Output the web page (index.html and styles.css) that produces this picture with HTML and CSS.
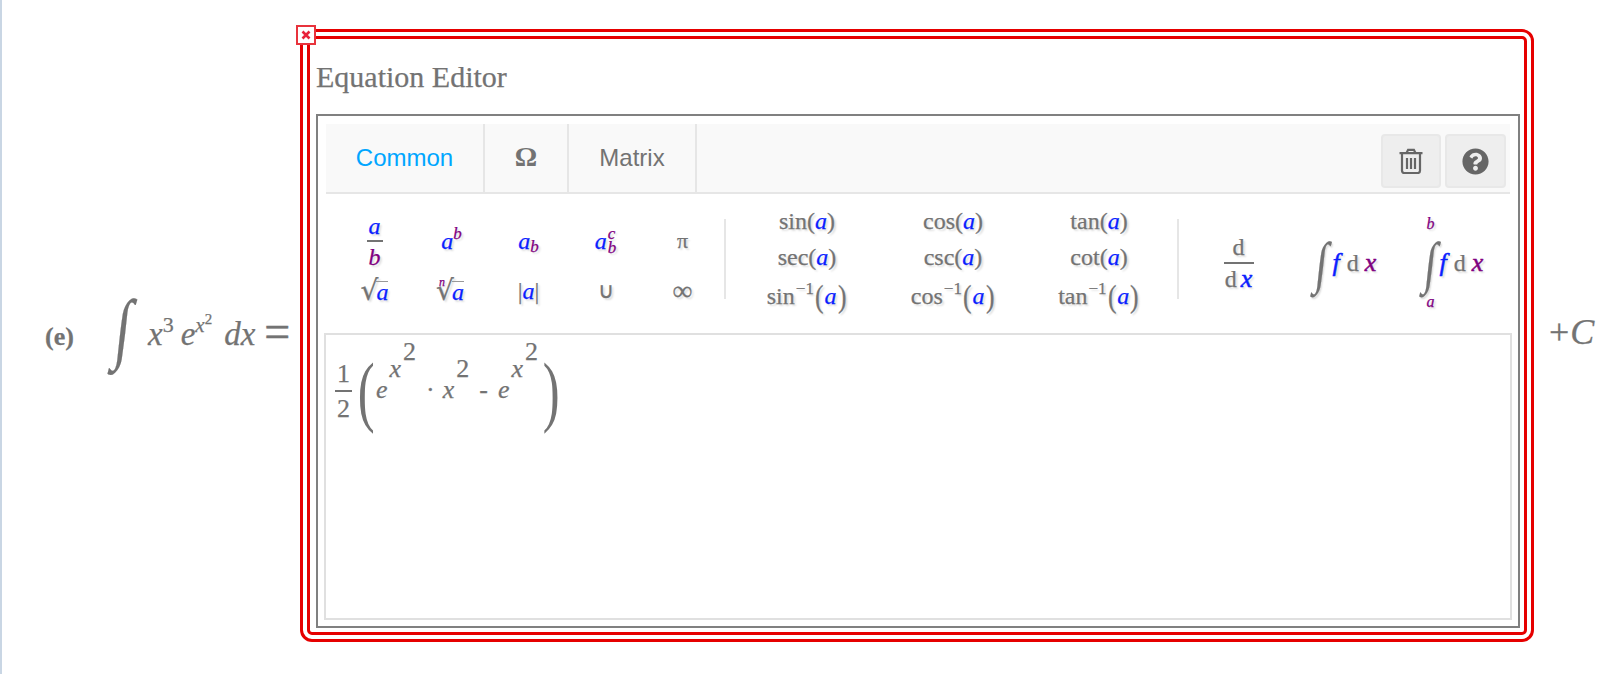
FILE: index.html
```html
<!DOCTYPE html>
<html lang="en">
<head>
<meta charset="utf-8">
<title>Equation Editor</title>
<link rel="stylesheet" href="styles.css">
</head>
<body>
<main class="page">
  <div class="question">
    <div class="eqn">
      <b class="qlabel">(e)</b>
      <span class="bigint">∫</span>
      <i>x</i><span class="s1">3</span>
      <i class="e">e</i><i class="s1 sx">x</i><span class="s2">2</span>
      <i class="dx">dx</i>
      <span class="equals">=</span>
    </div>
    <section class="editor">
      <button class="close" type="button" aria-label="Close">
        <svg viewBox="0 0 10 10" width="10" height="10"><path d="M1.5 1.5l7 7M8.5 1.5l-7 7"/></svg>
      </button>
      <h2 class="title">Equation Editor</h2>
      <div class="box">
        <div class="toolbar">
          <div class="tab tab-common">Common</div>
          <div class="tab tab-omega">Ω</div>
          <div class="tab tab-matrix">Matrix</div>
          <div class="actions">
            <button class="action a-trash" type="button" aria-label="Clear">
              <svg viewBox="0 0 24 26" width="24" height="26"><path d="M7.5 5l1.6-3.2h5.8L16.5 5M.5 5.2h23M3 5.5v17.3a2.2 2.2 0 0 0 2.2 2.2h13.6a2.2 2.2 0 0 0 2.2-2.2V5.5M8 10v11M12 10v11M16 10v11"/></svg>
            </button>
            <button class="action a-help" type="button" aria-label="Help">
              <svg viewBox="0 0 512 512" width="27" height="27"><path d="M504 256c0 136.997-111.043 248-248 248S8 392.997 8 256C8 119.083 119.043 8 256 8s248 111.083 248 248zM262.655 90c-54.497 0-89.255 22.957-116.549 63.758-3.536 5.286-2.353 12.415 2.715 16.258l34.699 26.31c5.205 3.947 12.621 3.008 16.665-2.122 17.864-22.658 30.113-35.797 57.303-35.797 20.429 0 45.698 13.148 45.698 32.958 0 14.976-12.363 22.667-32.534 33.976C247.128 238.528 216 254.941 216 296v4c0 6.627 5.373 12 12 12h56c6.627 0 12-5.373 12-12v-1.333c0-28.462 83.186-29.647 83.186-106.667 0-58.002-60.165-102-116.531-102zM256 338c-25.365 0-46 20.635-46 46 0 25.364 20.635 46 46 46s46-20.636 46-46c0-25.365-20.635-46-46-46z"/></svg>
            </button>
          </div>
        </div>
        <div class="palette">
          <div class="group g-basic">
            <div class="cell"><span class="frac"><i class="b">a</i><i class="p">b</i></span></div>
            <div class="cell"><i class="b">a</i><i class="p up">b</i></div>
            <div class="cell"><i class="b">a</i><i class="p down">b</i></div>
            <div class="cell"><i class="b">a</i><span class="scripts"><i class="p">c</i><i class="p">b</i></span></div>
            <div class="cell sym">π</div>
            <div class="cell"><span class="surd">√</span><i class="b over">a</i></div>
            <div class="cell"><i class="p idx">n</i><span class="surd">√</span><i class="b over">a</i></div>
            <div class="cell">|<i class="b">a</i>|</div>
            <div class="cell sym">∪</div>
            <div class="cell sym inf">∞</div>
          </div>
          <div class="sep"></div>
          <div class="group g-trig">
            <div class="cell">sin(<i class="b">a</i>)</div>
            <div class="cell">cos(<i class="b">a</i>)</div>
            <div class="cell">tan(<i class="b">a</i>)</div>
            <div class="cell">sec(<i class="b">a</i>)</div>
            <div class="cell">csc(<i class="b">a</i>)</div>
            <div class="cell">cot(<i class="b">a</i>)</div>
            <div class="cell">sin<span class="inv">−1</span><span class="lp">(</span><i class="b">a</i><span class="lp">)</span></div>
            <div class="cell">cos<span class="inv">−1</span><span class="lp">(</span><i class="b">a</i><span class="lp">)</span></div>
            <div class="cell">tan<span class="inv">−1</span><span class="lp">(</span><i class="b">a</i><span class="lp">)</span></div>
          </div>
          <div class="sep"></div>
          <div class="group g-calc">
            <div class="cell"><span class="frac wide"><span>d</span><span>d<i class="b bx dxv">x</i></span></span></div>
            <div class="cell"><span class="pint">∫</span><i class="b bx">f</i><span class="d">d</span><i class="p bx">x</i></div>
            <div class="cell"><span class="limits"><i class="p lim">b</i><span class="pint">∫</span><i class="p lim">a</i></span><i class="b bx">f</i><span class="d">d</span><i class="p bx">x</i></div>
          </div>
        </div>
        <div class="input">
          <span class="ifrac"><span>1</span><span>2</span></span>
          <span class="iparen">(</span>
          <i class="ie">e</i><i class="sup1 tx">x</i><span class="sup2 tw">2</span>
          <span class="dot">·</span>
          <i>x</i><span class="sup1 tw">2</span>
          <span class="minus">-</span>
          <i class="ie2">e</i><i class="sup1 tx">x</i><span class="sup2 tw">2</span>
          <span class="iparen rp">)</span>
        </div>
      </div>
    </section>
    <div class="tail"><span class="plus">+</span><i>C</i></div>
  </div>
</main>
</body>
</html>
```

FILE: styles.css
```css
* { box-sizing: border-box; }
html, body { margin: 0; padding: 0; background: #fff; }
body { font-family: "Liberation Serif", "Times New Roman", serif; color: #737373; -webkit-text-stroke: .25px currentColor; }
.page { border-left: 2px solid #c9d6e4; height: 674px; overflow: hidden; }
.question { display: flex; align-items: center; padding-top: 29px; height: 642px; }

.eqn { width: 298px; padding: 0 0 12px 43px; font-size: 33px; white-space: nowrap; display: flex; align-items: baseline; }
.qlabel { font-size: 26px; width: 62px; }
.bigint { font-size: 78px; line-height: 0; width: 41px; font-weight: 400; transform: translate(3px, 9px) scaleX(.72) skewX(-9deg); }
.s1 { font-size: 22px; transform: translateY(-13px); }
.s2 { font-size: 15px; transform: translateY(-21px); }
.e { margin-left: 7px; }
.sx { font-size: 21px; }
.dx { margin-left: 12px; }
.equals { font-size: 46px; margin-left: 9px; -webkit-text-stroke: .5px currentColor; transform: translateY(2px); }

.editor { position: relative; width: 1234px; height: 613px; border: 10px double #e60000; border-radius: 12px; padding: 0 4px 4px 6px; display: flex; flex-direction: column; flex: none; }
.close { position: absolute; left: -14px; top: -14px; width: 20px; height: 20px; padding: 0; background: #fff; border: 2px solid #e8333c; display: flex; align-items: center; justify-content: center; }
.close path { stroke: #e8233a; stroke-width: 2.6; fill: none; }
.title { margin: 0; height: 75px; padding-top: 1px; display: flex; align-items: center; font-size: 30px; font-weight: 400; }

.box { flex: 1; border: 2px solid #808080; padding: 8px 6px 6px 6px; display: flex; flex-direction: column; min-height: 0; }
.toolbar { display: flex; height: 70px; margin: 0 2px 0 2px; background: #f9f9f9; border-bottom: 2px solid #e6e6e6; flex: none; }
.tab { display: flex; align-items: center; justify-content: center; border-right: 2px solid #e6e6e6; font-family: "Liberation Sans", Arial, sans-serif; font-size: 24px; -webkit-text-stroke: 0; }
.tab-common { width: 159px; color: #00a6ff; }
.tab-omega { width: 84px; font-family: "Liberation Serif", serif; font-weight: 700; font-size: 28px; padding-bottom: 2px; }
.tab-matrix { width: 128px; }
.actions { margin-left: auto; display: flex; gap: 4px; padding: 10px 4px 0 0; }
.action { height: 54px; background: #eeeeee; border: 2px solid #e8e8e8; border-radius: 4px; padding: 0; display: flex; align-items: center; justify-content: center; }
.a-trash path { fill: none; stroke: #666; stroke-width: 2.2; }
.a-help path { fill: #666; }
.a-trash { width: 60px; }
.a-help { width: 61px; }

.palette { height: 139px; flex: none; display: flex; align-items: flex-start; padding: 25px 0 0 10px; margin: 0 2px; text-shadow: 2px 2px 2px #ddd; font-size: 24px; }
.group { display: grid; height: 80px; }
.g-basic { grid-template-columns: repeat(5, 77px); grid-template-rows: 50px 50px; width: 386px; margin-top: -3px; }
.g-trig { grid-template-columns: repeat(3, 146px); grid-template-rows: 36px 36px 42px; width: 438px; margin: -16px 3px 0 8px; height: 114px; }
.g-calc { grid-template-columns: 105px 108px 108px; width: 321px; margin: -4px 0 0 7px; }
.sep { width: 2px; height: 80px; background: #e6e6e6; flex: none; margin-left: 2px; }
.cell { display: flex; align-items: center; justify-content: center; white-space: nowrap; line-height: 1; }
.b { color: #0a1eff; }
.p { color: #800080; }
.up { font-size: 17px; transform: translateY(-8px); }
.down { font-size: 17px; transform: translateY(5px); }
.scripts { display: inline-flex; flex-direction: column; font-size: 17px; line-height: 14px; margin-left: 1px; }
.sym { font-size: 22px; }
.inf { font-size: 28px; }
.frac { display: inline-flex; flex-direction: column; align-items: center; line-height: 24px; }
.frac > :first-child { border-bottom: 2px solid #737373; padding: 0 2px 2px; min-width: 16px; text-align: center; }
.frac > :last-child { padding-top: 3px; }
.frac.wide > :first-child { min-width: 30px; padding: 0 0 3px; }
.surd { font-family: "DejaVu Serif", serif; font-size: 28px; margin-right: -2px; }
.over { border-top: 1px solid #999; line-height: 20px; }
.idx { font-size: 12px; margin-right: -9px; transform: translateY(-9px); }
.inv { font-size: 17px; transform: translateY(-8px); margin-left: 1px; }
.lp { font-size: 32px; font-weight: 400; transform: scaleX(.8); }
.bx { font-size: 26px; -webkit-text-stroke: .5px currentColor; }
.dxv { margin-left: 4px; }
.d { margin: 0 6px 0 7px; }
.pint { font-size: 57px; line-height: 60px; font-weight: 400; transform: scaleX(.72) skewX(-9deg); margin-right: 3px; }
.limits { display: inline-flex; flex-direction: column; align-items: center; margin-right: 1px; }
.limits .pint { margin-right: 0; }
.lim { font-size: 16px; line-height: 18px; }

.input { flex: 1; border: 2px solid #e0e0e0; display: flex; align-items: baseline; padding: 37px 0 0 9px; font-size: 26px; line-height: 1; white-space: nowrap; }
.ifrac { display: inline-flex; flex-direction: column; align-items: center; transform: translateY(-16px); margin-right: 2px; }
.ifrac > :first-child { border-bottom: 2px solid #737373; padding: 0 2px 3px; }
.ifrac > :last-child { padding-top: 4px; }
.iparen { font-size: 78px; line-height: 0; font-weight: 400; width: 16px; transform: translateY(19px) scaleX(.65); margin-left: 1px; -webkit-text-stroke: 0; }
.ie { margin-left: 5px; }
.ie2 { margin-left: 2px; }
.sup1 { transform: translateY(-21px); }
.sup2 { transform: translateY(-38px); }
.tx { margin-left: 2px; }
.tw { margin-left: 2px; }
.dot { margin-left: 10px; margin-right: 8px; }
.minus { margin: 0 8px 0 10px; }
.rp { margin-left: 2px; }

.tail { margin: 0 0 8px 15px; font-size: 36px; white-space: nowrap; }
.plus { margin-right: 1px; }
```
